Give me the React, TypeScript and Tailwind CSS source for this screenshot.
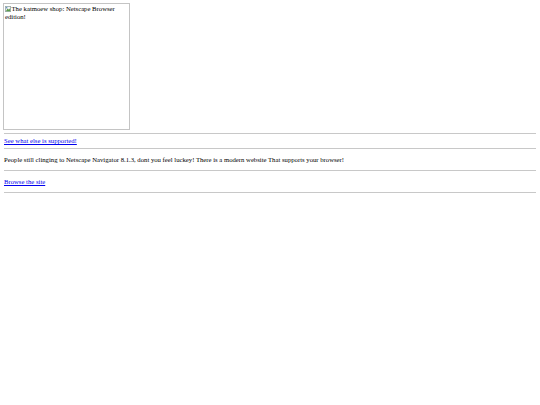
export default function App() {
  return (
    <div className="min-h-[405px] bg-white pl-[3px] pr-[4px] pt-[3px] text-[6.7px] leading-[8px] text-black" style={{ fontFamily: '"Liberation Serif", "Times New Roman", serif' }}>
      <div className="h-[127px] w-[127px] border border-[#c4c4c4]">
        <div className="pl-[1px] pt-[1px]">
          <span className="leading-[7px]">
            <svg width="6" height="6" viewBox="0 0 7 7" className="mr-[0.5px] inline-block align-[-1px]">
              <rect x="0.5" y="0.5" width="6" height="6" fill="#f4f4f4" stroke="#9aa" strokeWidth="1" />
              <path d="M1 6 L3 3 L4.5 4.5 L6 2.5 L6 6 Z" fill="#5a9a4a" />
              <circle cx="2" cy="2" r="0.8" fill="#4a7fc0" />
            </svg>
            The katmoew shop: Netscape Browser edition!
          </span>
        </div>
      </div>
      <div className="ml-[1px] mt-[3px]">
        <div className="border-t border-[#c8c8c8]" />
        <div className="flex h-[14px] items-center">
          <a href="#" className="text-[#0000ee] underline">See what else is supported!</a>
        </div>
        <div className="border-t border-[#c8c8c8]" />
        <div className="flex h-[21px] items-center">
          <p>People still clinging to Netscape Navigator 8.1.3, dont you feel luckey! There is a modern website That supports your browser!</p>
        </div>
        <div className="border-t border-[#c8c8c8]" />
        <div className="flex h-[21px] items-center">
          <a href="#" className="text-[#0000ee] underline">Browse the site</a>
        </div>
        <div className="border-t border-[#c8c8c8]" />
      </div>
    </div>
  )
}
